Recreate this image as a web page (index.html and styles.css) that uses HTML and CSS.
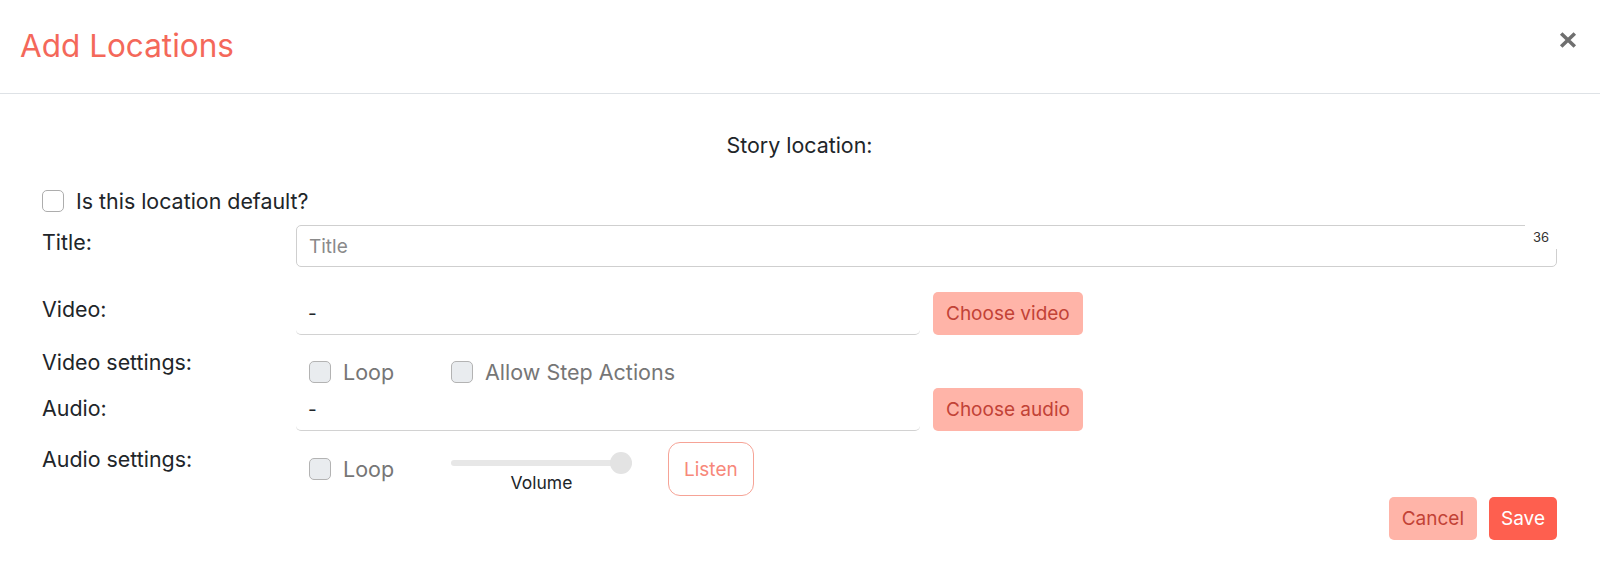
FILE: index.html
```html
<!DOCTYPE html>
<html lang="en">
<head>
<meta charset="utf-8">
<title>Add Locations</title>
<link rel="stylesheet" href="styles.css">
</head>
<body>
<div class="modal">
  <header class="modal-header">
    <h1 class="modal-title">Add Locations</h1>
    <button class="close" aria-label="Close">
      <svg width="18" height="16" viewBox="0 0 18 16"><path d="M2.2 1.5 L15.8 14.5 M15.8 1.5 L2.2 14.5" stroke="#6f6f6f" stroke-width="3.6" fill="none"/></svg>
    </button>
  </header>
  <main class="modal-body">
    <p class="section-title">Story location:</p>
    <label class="default-check"><input type="checkbox" class="cb">Is this location default?</label>
    <div class="form">
      <div class="row row-title">
        <span class="label">Title:</span>
        <div class="field">
          <input class="text-input" type="text" placeholder="Title">
          <span class="counter">36</span>
        </div>
      </div>
      <div class="row row-video">
        <span class="label">Video:</span>
        <div class="media">
          <div class="media-value">-</div>
          <button class="btn btn-light">Choose video</button>
        </div>
      </div>
      <div class="row row-vsettings">
        <span class="label">Video settings:</span>
        <div class="settings">
          <label class="opt"><input type="checkbox" class="cb cb-muted">Loop</label>
          <label class="opt opt-wide"><input type="checkbox" class="cb cb-muted">Allow Step Actions</label>
        </div>
      </div>
      <div class="row row-audio">
        <span class="label label-audio">Audio:</span>
        <div class="media">
          <div class="media-value">-</div>
          <button class="btn btn-light">Choose audio</button>
        </div>
      </div>
      <div class="row row-asettings">
        <span class="label">Audio settings:</span>
        <div class="settings settings-audio">
          <label class="opt"><input type="checkbox" class="cb cb-muted">Loop</label>
          <div class="volume">
            <input type="range" class="slider" min="0" max="100" value="100">
            <span class="volume-label">Volume</span>
          </div>
          <button class="btn-outline">Listen</button>
        </div>
      </div>
    </div>
    <div class="footer">
      <button class="btn btn-light">Cancel</button>
      <button class="btn btn-primary">Save</button>
    </div>
  </main>
</div>
</body>
</html>
```
FILE: styles.css
```css
* { box-sizing: border-box; }

body {
  margin: 0;
  font-family: Inter, "Noto Sans", "Liberation Sans", sans-serif;
  color: #212529;
  background: #fff;
}

.modal-header {
  height: 94px;
  border-bottom: 1px solid #dee2e6;
  display: flex;
  justify-content: space-between;
  align-items: flex-start;
  padding: 0 23px 0 20px;
}

.modal-title {
  margin: 28px 0 0;
  font-size: 31.5px;
  line-height: 36px;
  font-weight: 400;
  color: #f4685a;
}

.close {
  margin-top: 32px;
  padding: 0;
  border: none;
  background: none;
  width: 18px;
  height: 16px;
  display: block;
}
.close svg { display: block; }

.modal-body {
  padding: 0 43px 0 42px;
}

.section-title {
  margin: 36px 0 0;
  text-align: center;
  font-size: 21.4px;
  line-height: 30px;
}

.default-check {
  margin-top: 26px;
  display: flex;
  align-items: center;
  gap: 12px;
  font-size: 21.4px;
  line-height: 30px;
}

.cb {
  -webkit-appearance: none;
  appearance: none;
  margin: 0;
  width: 22px;
  height: 22px;
  border: 1px solid #adadad;
  border-radius: 5px;
  background: #fff;
  flex: none;
}
.cb-muted {
  background: #e9ecef;
  border-color: #b3b3b3;
}

.form { margin-top: 9px; }

.row {
  display: grid;
  grid-template-columns: 254px 1fr;
}

.label {
  font-size: 21.4px;
  line-height: 30px;
  padding-top: 2px;
}
.label-audio { padding-top: 5px; }

.field { position: relative; }

.text-input {
  display: block;
  width: 100%;
  height: 42px;
  border: 1px solid #cfcfcf;
  border-radius: 5px;
  padding: 0 12px;
  font-family: inherit;
  font-size: 19px;
  color: #212529;
  outline: none;
}
.text-input::placeholder { color: #8a8a8a; }

.counter {
  position: absolute;
  top: -2px;
  right: -2px;
  padding: 6px 10px 4px 8px;
  background: #fff;
  font-size: 13px;
  line-height: 16px;
  color: #333;
}

.row-video { margin-top: 25px; }
.row-vsettings { margin-top: 10px; height: 43px; }
.row-audio { margin-top: 0; }
.row-asettings { margin-top: 11px; }

.media {
  display: flex;
  align-items: stretch;
  height: 43px;
}
.media-value {
  width: 624px;
  border-bottom: 1px solid #d2d2d2;
  border-radius: 0 0 5px 5px;
  padding-left: 12px;
  font-size: 19px;
  display: flex;
  align-items: center;
}

.btn {
  height: 43px;
  padding: 0 13px;
  border: none;
  border-radius: 5px;
  font-family: inherit;
  font-size: 19px;
}
.media .btn { margin-left: 13px; }
.btn-light {
  background: #ffb4a8;
  color: #c24236;
}
.btn-primary {
  background: #fe5f4f;
  color: #fff;
  padding: 0 12px;
}

.settings {
  display: flex;
  align-items: flex-start;
  padding-left: 13px;
}
.opt {
  margin-top: 12px;
  display: flex;
  align-items: center;
  gap: 12px;
  width: 142px;
  font-size: 21.5px;
  line-height: 30px;
  color: #767676;
}
.opt-wide { width: auto; }

.volume {
  margin-top: 10px;
  width: 181px;
  display: flex;
  flex-direction: column;
  align-items: center;
}
.slider {
  -webkit-appearance: none;
  appearance: none;
  display: block;
  margin: 0;
  width: 181px;
  height: 22px;
  background: transparent;
}
.slider::-webkit-slider-runnable-track {
  height: 6px;
  border-radius: 3px;
  background: #e7e7e7;
}
.slider::-webkit-slider-thumb {
  -webkit-appearance: none;
  appearance: none;
  width: 22px;
  height: 22px;
  margin-top: -8px;
  border-radius: 50%;
  background: #e3e3e3;
  border: none;
}
.volume-label {
  font-size: 17.5px;
  line-height: 18px;
}

.btn-outline {
  margin-left: 36px;
  height: 54px;
  padding: 0 15px;
  border: 1px solid #f6a396;
  border-radius: 12px;
  background: #fff;
  color: #f7887a;
  font-family: inherit;
  font-size: 19px;
}

.footer {
  margin-top: 1px;
  display: flex;
  justify-content: flex-end;
  gap: 12px;
}
```
